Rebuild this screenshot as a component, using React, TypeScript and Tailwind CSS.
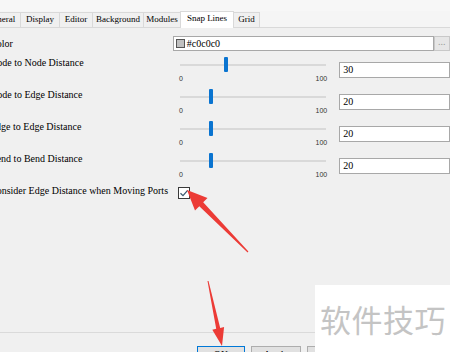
import React from "react";

const tabs = [
  { label: "General", w: 40 },
  { label: "Display", w: 40 },
  { label: "Editor", w: 34 },
  { label: "Background", w: 52 },
  { label: "Modules", w: 38 },
  { label: "Snap Lines", w: 54, active: true },
  { label: "Grid", w: 27 },
];

const rows = [
  { label: "Node to Node Distance", value: 30 },
  { label: "Node to Edge Distance", value: 20 },
  { label: "Edge to Edge Distance", value: 20 },
  { label: "Bend to Bend Distance", value: 20 },
];

function SliderRow({ label, value }: { label: string; value: number }) {
  return (
    <div className="flex h-[32px]">
      <div className="w-[190px] pt-[3px] leading-[12px] whitespace-nowrap">{label}</div>
      <div className="w-[152px] flex flex-col">
        <div className="relative h-[18px] mt-[3px]">
          <div className="absolute left-[2px] right-[2px] top-[7px] h-[2px] bg-[#d9d9d9]" />
          <div
            className="absolute top-0 w-[4px] h-[15px] bg-[#0a74d0] rounded-[1px]"
            style={{ left: 3 + (148 * value) / 100 - 1 }}
          />
        </div>
        <div className="flex justify-between px-[1px] text-[7px] leading-[8px] text-[#333] font-['Liberation_Sans',sans-serif]">
          <span>0</span>
          <span>100</span>
        </div>
      </div>
      <div className="ml-[11px] mt-[8px] w-[112px] h-[16px] bg-white border border-[#a8a8a8] pl-[3px] leading-[14px] text-[10px]">
        {value}
      </div>
    </div>
  );
}

export default function App() {
  return (
    <div className="relative w-[450px] h-[352px] overflow-hidden bg-[#f0f0f0] text-[10px] text-black font-['Liberation_Serif',serif] flex flex-col">
      <div className="h-[11px] bg-[#f7f7f7]" />
      <div className="h-[17px] flex items-end border-b border-[#d9d9d9] bg-[#f5f5f5]">
        <div className="ml-[-18px] flex items-end text-[9px]">
          {tabs.map((t) => (
            <div
              key={t.label}
              className={
                t.active
                  ? "h-[17px] bg-white border border-[#d9d9d9] border-b-0 -ml-px flex items-center justify-center whitespace-nowrap mb-[-1px] pb-[2px]"
                  : "h-[15px] bg-[#f0f0f0] border border-[#d9d9d9] border-b-0 -ml-px flex items-center justify-center whitespace-nowrap"
              }
              style={{ width: t.w }}
            >
              {t.label}
            </div>
          ))}
        </div>
      </div>
      <div className="ml-[-10px] flex flex-col">
        <div className="flex mt-[8px] h-[15px]">
          <div className="w-[184px] leading-[15px] whitespace-nowrap">Color</div>
          <div className="w-[263px] h-[15px] bg-white border border-[#a8a8a8] flex items-center pl-[2px] gap-[2px]">
            <div className="w-[9px] h-[9px] bg-[#c0c0c0] border border-[#555]" />
            <span className="leading-[13px]">#c0c0c0</span>
          </div>
          <div className="w-[16px] h-[15px] bg-[#e6e6e6] border border-[#c8c8c8] text-[#999] leading-[10px] pl-[3px]">...</div>
        </div>
        <div className="mt-[3px]">
          {rows.map((r) => (
            <SliderRow key={r.label} label={r.label} value={r.value} />
          ))}
        </div>
        <div className="flex h-[16px] items-center">
          <div className="w-[188px] whitespace-nowrap leading-[12px] mt-[1px]">Consider Edge Distance when Moving Ports</div>
          <div className="w-[12px] h-[12px] mt-[6px] bg-white border border-[#3a3a3a] flex items-center justify-center">
            <svg width="10" height="10" viewBox="0 0 10 10">
              <path d="M1.5 5.2 L4 7.6 L8.6 2.4" fill="none" stroke="#3b5a70" strokeWidth="1.3" />
            </svg>
          </div>
        </div>
      </div>
      <div className="flex-1" />
      <div className="h-[20px] border-t border-[#dadada] bg-[#f0f0f0] flex">
        <div className="ml-[197px] mt-[13px] flex gap-[6px]">
          <div className="w-[48px] h-[22px] bg-[#e1e1e1] border border-[#0078d7] flex justify-center pt-[3px] leading-[10px]">OK</div>
          <div className="w-[50px] h-[22px] bg-[#e1e1e1] border border-[#adadad] flex justify-center pt-[3px] leading-[10px]">Apply</div>
          <div className="w-[50px] h-[22px] bg-[#e1e1e1] border border-[#adadad] flex justify-center pt-[3px] leading-[10px]">Cancel</div>
        </div>
      </div>

      <svg className="absolute left-0 top-0 pointer-events-none" width="450" height="352" viewBox="0 0 450 352">
        <polygon
          points="187,190 207.5,198 203.2,202.3 248.4,251.6 247.6,252.4 199.3,206.2 195,210.5"
          fill="#ec3b36"
        />
        <polygon
          points="222,346 212.3,329.7 216.2,328.8 207.5,281.1 208.5,280.9 220.2,328 224.1,327.1"
          fill="#ec3b36"
        />
      </svg>

      <div className="absolute left-[315px] top-[285px] right-0 bottom-0 bg-white flex items-start pl-[5px] pt-[15px]">
        <span className="text-[31px] leading-[37px] text-[#c4c4c4] tracking-[0.5px] font-['Noto_Sans_CJK_SC',sans-serif]">软件技巧</span>
      </div>
    </div>
  );
}
